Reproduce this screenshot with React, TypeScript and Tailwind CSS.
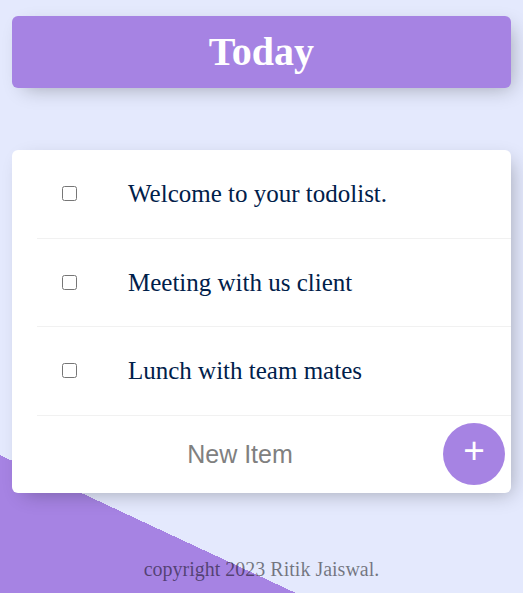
import { useState } from "react"

interface Item {
  id: number
  name: string
  done: boolean
}

export default function App() {
  const [items, setItems] = useState<Item[]>([
    { id: 1, name: "Welcome to your todolist.", done: false },
    { id: 2, name: "Meeting with us client", done: false },
    { id: 3, name: "Lunch with team mates", done: false },
  ])
  const [newItem, setNewItem] = useState("")

  const toggle = (id: number) =>
    setItems(items.map((i) => (i.id === id ? { ...i, done: !i.done } : i)))

  const addItem = () => {
    if (!newItem.trim()) return
    setItems([...items, { id: Date.now(), name: newItem, done: false }])
    setNewItem("")
  }

  return (
    <div className="h-[593px] w-full overflow-hidden bg-[linear-gradient(25deg,#a683e3_125px,#e4e9fd_125px)] font-['Liberation_Serif',serif]">
      <div className="px-[12px] pt-[16px]">
        <div className="h-[72px] rounded-[6px] bg-[#a683e3] shadow-[6px_6px_19px_-6px_rgba(0,0,0,0.3)] flex items-center justify-center">
          <h1 className="text-[40px] font-bold text-white leading-none">Today</h1>
        </div>

        <div className="mt-[62px] rounded-[6px] bg-white shadow-[6px_6px_19px_-6px_rgba(0,0,0,0.3)]">
          {items.map((item) => (
            <div
              key={item.id}
              className="ml-[25px] h-[88.6px] flex items-center border-b border-[#f1f1f1]"
            >
              <input
                type="checkbox"
                checked={item.done}
                onChange={() => toggle(item.id)}
                className="m-[25px] w-[15px] h-[15px]"
              />
              <p
                className={`p-[25px] pl-[26px] text-[25px] text-[#00204a] ${
                  item.done ? "line-through decoration-[#a683e3]" : ""
                }`}
              >
                {item.name}
              </p>
            </div>
          ))}

          <div className="ml-[25px] h-[77px] flex items-center">
            <input
              type="text"
              placeholder="New Item"
              value={newItem}
              onChange={(e) => setNewItem(e.target.value)}
              className="flex-1 h-[75px] text-center text-[25px] font-['Liberation_Sans',sans-serif] font-light outline-none placeholder:text-[grey]"
            />
            <button
              onClick={addItem}
              className="w-[62px] h-[62px] mr-[6px] rounded-full bg-[#a683e3] text-white text-[37px] leading-none pb-[7px] font-['Liberation_Sans',sans-serif] flex items-center justify-center"
            >
              +
            </button>
          </div>
        </div>

        <footer className="mt-[61px] text-center text-[20px] text-black/50">
          copyright 2023 Ritik Jaiswal.
        </footer>
      </div>
    </div>
  )
}
